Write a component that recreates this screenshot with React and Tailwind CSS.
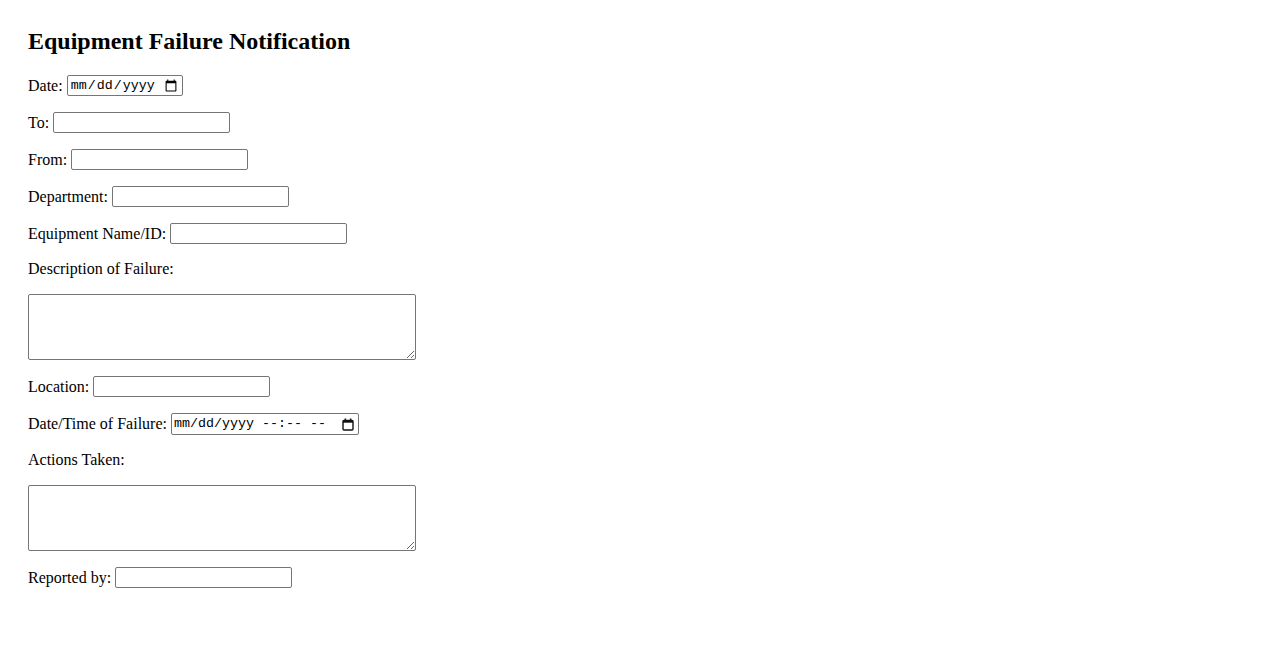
import React from "react";

const inputCls =
  "box-border h-[21px] w-[177px] border border-solid border-[#767676] rounded-[2px] bg-white px-[2px] py-[1px] text-[13.33px] text-black outline-none [font-family:Arial,'Liberation_Sans',sans-serif]";
const dateCls =
  "box-border border border-solid border-[#767676] rounded-[2px] bg-white px-[2px] py-[1px] text-[13.33px] text-black outline-none [font-family:'Liberation_Mono','DejaVu_Sans_Mono',monospace]";
const areaCls =
  "box-border block h-[66px] w-[388px] border border-solid border-[#767676] rounded-[2px] bg-white px-[2px] py-[2px] text-[13.33px] outline-none [font-family:'Liberation_Mono',monospace]";

function Row({ label, children }) {
  return (
    <div className="flex items-center gap-[4px]">
      <label className="leading-[18px]">{label}</label>
      {children}
    </div>
  );
}

function CalendarIcon() {
  return (
    <svg width="12" height="13" viewBox="0 0 12 13" className="block">
      <rect x="1" y="2.5" width="10" height="9.5" rx="1" fill="none" stroke="#111" strokeWidth="1.4" />
      <rect x="1" y="2.5" width="10" height="2.2" fill="#111" />
      <rect x="2.6" y="0.5" width="1.5" height="2.5" fill="#111" />
      <rect x="7.9" y="0.5" width="1.5" height="2.5" fill="#111" />
    </svg>
  );
}

export default function App() {
  return (
    <div className="min-h-[650px] bg-white p-[28px] text-[16px] text-black [font-family:'Liberation_Serif','Times_New_Roman',serif]">
      <h2 className="mb-[20px] h-[27px] text-[24px] font-bold leading-[27px]">
        Equipment Failure Notification
      </h2>
      <form className="flex flex-col gap-4">
        <Row label="Date:">
          <input type="date" className={`${dateCls} h-[21px] w-[116px]`} />
        </Row>
        <Row label="To:">
          <input type="text" className={inputCls} />
        </Row>
        <Row label="From:">
          <input type="text" className={inputCls} />
        </Row>
        <Row label="Department:">
          <input type="text" className={inputCls} />
        </Row>
        <Row label="Equipment Name/ID:">
          <input type="text" className={inputCls} />
        </Row>
        <label className="block h-[18px] leading-[18px]">Description of Failure:</label>
        <textarea rows={4} className={areaCls} />
        <Row label="Location:">
          <input type="text" className={inputCls} />
        </Row>
        <Row label="Date/Time of Failure:">
          <div
            role="textbox"
            tabIndex={0}
            className="box-border flex h-[22px] w-[188px] items-center rounded-[2px] border border-solid border-[#767676] bg-white pl-[2px] pr-[4px] text-[13.33px] text-black [font-family:'Liberation_Mono','DejaVu_Sans_Mono',monospace]"
          >
            <span className="whitespace-pre leading-[16px]">mm/dd/yyyy --:-- --</span>
            <span className="ml-auto">
              <CalendarIcon />
            </span>
          </div>
        </Row>
        <label className="block h-[18px] leading-[18px]">Actions Taken:</label>
        <textarea rows={4} className={areaCls} />
        <Row label="Reported by:">
          <input type="text" className={inputCls} />
        </Row>
      </form>
    </div>
  );
}
